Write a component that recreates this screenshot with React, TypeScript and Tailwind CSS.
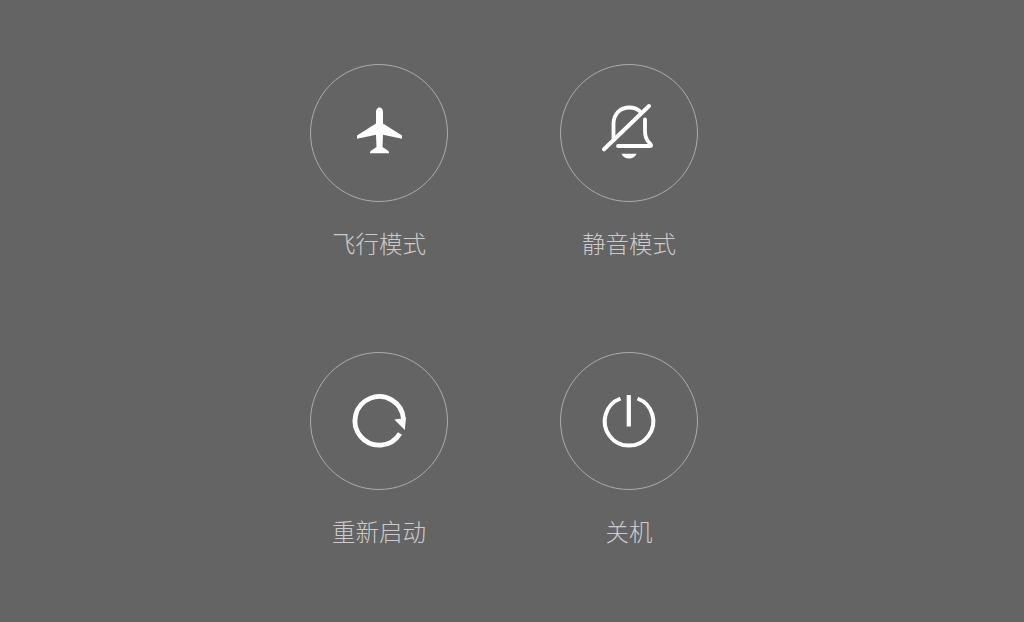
// Power menu
import React from 'react';

const AirplaneIcon = () => (
  <svg width="64" height="64" viewBox="0 0 64 64" fill="#fff">
    <path d="M32.5 6.5 C30 6.5 29 9 29 11.5 L29 22.5 L10 34.5 L10 37.8 L29 33.8 L29.5 46 L23.5 50 L22.8 52.3 L42.2 52.3 L41.5 50 L35.5 46 L36 33.8 L55 37.8 L55 34.5 L36 22.5 L36 11.5 C36 9 35 6.5 32.5 6.5 Z" />
  </svg>
);

const BellOffIcon = () => (
  <svg width="64" height="64" viewBox="0 0 64 64" fill="none" stroke="#fff" strokeWidth="3.8" strokeLinecap="round">
    <path d="M16.5 37 L16.5 23 C16.5 12.5 23.5 6.5 32.5 6.5 C36.5 6.5 40 7.8 42.5 10" />
    <path d="M48 18.5 L48 30 C48 37 50 40 53 42.5 C54.5 44 54.5 45 53 45 L21 45" />
    <path d="M7 48.3 L52 5" strokeWidth="4" />
    <path d="M24.5 52.8 L39.5 52.8 C38.5 56 35.5 57.5 32 57.5 C28.5 57.5 25.5 56 24.5 52.8 Z" fill="#fff" stroke="none" />
  </svg>
);

const RestartIcon = () => (
  <svg width="64" height="64" viewBox="0 0 64 64" fill="none">
    <path d="M53 44.5 A24.3 24.3 0 1 1 56.5 30" stroke="#fff" strokeWidth="4.8" />
    <path d="M47.3 30.5 L59 29 L57.8 41 Z" fill="#fff" />
  </svg>
);

const PowerIcon = () => (
  <svg width="64" height="64" viewBox="0 0 64 64" fill="none" stroke="#fff" strokeWidth="4">
    <path d="M23.5 9.5 A24.3 24.3 0 1 0 40.5 9.5" />
    <path d="M31.8 6 L31.8 37.5" strokeWidth="4.2" />
  </svg>
);

const items = [
  { label: '飞行模式', icon: <AirplaneIcon /> },
  { label: '静音模式', icon: <BellOffIcon /> },
  { label: '重新启动', icon: <RestartIcon /> },
  { label: '关机', icon: <PowerIcon /> },
];

const App = () => {
  return (
    <div className="w-[1024px] h-[622px] overflow-hidden bg-[#646464] pt-[64px] pl-[310px] font-['Noto_Sans_CJK_SC',sans-serif]">
      <div className="grid grid-cols-[138px_138px] gap-x-[112px] gap-y-[93px]">
        {items.map(item => (
          <div key={item.label} className="flex flex-col items-center">
            <div className="w-[138px] h-[138px] rounded-full border border-[#ababab] flex items-center justify-center">
              {item.icon}
            </div>
            <span className="mt-[25px] h-[32px] leading-[32px] text-[23.5px] font-light whitespace-nowrap text-[#cbcbcb]">
              {item.label}
            </span>
          </div>
        ))}
      </div>
    </div>
  );
};

export default App;
